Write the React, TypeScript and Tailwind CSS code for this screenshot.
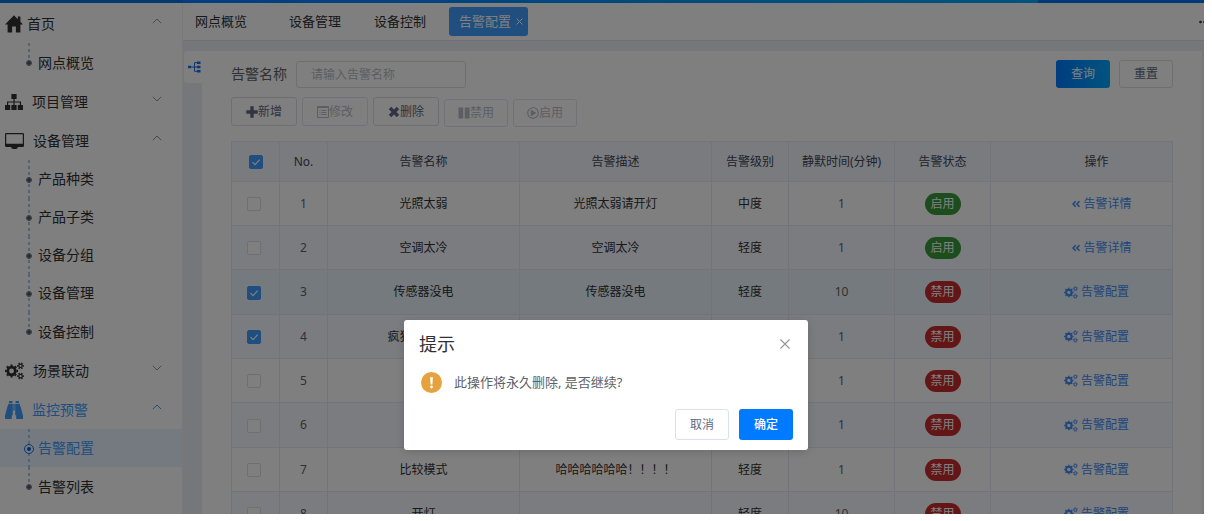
import React, { useState } from "react";
import { FaAngleDoubleLeft, FaRegPlayCircle } from "react-icons/fa";

type MenuGroup = {
  label: string;
  icon: React.ReactNode;
  open: boolean;
  gap: string;
  active?: boolean;
  children: string[];
};

type Row = {
  name: string;
  desc: string;
  level: string;
  minutes: number;
  enabled: boolean;
  checked: boolean;
  current?: boolean;
};

function HomeIcon() {
  return (
    <svg viewBox="0 0 18 18" className="size-[18px]" fill="currentColor" aria-hidden="true">
      <path d="M9 .3 0 9.600h2.600V17.600H7.100V11.600h3.800v6h4.500V9.600H18L15.400 6.700V1.600h-2.600v2.600z" />
    </svg>
  );
}

function SitemapIcon() {
  return (
    <svg viewBox="0 0 18 16" className="h-4 w-[18px]" fill="currentColor" aria-hidden="true">
      <path d="M6.400 0h5.200v5H6.400zM0 11h5.200v5H0zM6.400 11h5.200v5H6.400zM12.800 11H18v5h-5.200z" />
      <path d="M9 5v6M2.600 11V8h12.800v3" fill="none" stroke="currentColor" strokeWidth="1.200" />
    </svg>
  );
}

function MonitorIcon() {
  return (
    <svg viewBox="0 0 19 16" className="h-4 w-[19px]" fill="currentColor" aria-hidden="true">
      <path
        fillRule="evenodd"
        d="M1.300 0h16.400A1.300 1.300 0 0 1 19 1.300v11.400a1.300 1.300 0 0 1-1.300 1.300h-5v1.200h-1V16H7.300v-.8h-1V14h-5A1.300 1.300 0 0 1 0 12.700V1.300A1.300 1.300 0 0 1 1.300 0zM1.200 1.200v9.600h16.600V1.200z"
      />
    </svg>
  );
}

function CogsIcon({ className }: { className: string }) {
  return (
    <svg viewBox="0 0 18 17" className={className} fill="none" stroke="currentColor" aria-hidden="true">
      <circle cx="6.200" cy="8.500" r="3.600" strokeWidth="2.600" />
      <circle cx="6.200" cy="8.500" r="5.400" strokeWidth="1.600" pathLength="16" strokeDasharray="1 1" strokeDashoffset="0.5" />
      <circle cx="14.700" cy="3.600" r="1.700" strokeWidth="1.200" />
      <circle cx="14.700" cy="3.600" r="2.700" strokeWidth="1.100" pathLength="12" strokeDasharray="1 1" strokeDashoffset="0.5" />
      <circle cx="14.700" cy="13.400" r="1.700" strokeWidth="1.200" />
      <circle cx="14.700" cy="13.400" r="2.700" strokeWidth="1.100" pathLength="12" strokeDasharray="1 1" strokeDashoffset="0.5" />
    </svg>
  );
}

function BinocularsIcon() {
  return (
    <svg viewBox="0 0 18 18" className="size-[18px]" fill="currentColor" aria-hidden="true">
      <path d="M4 0h3.500v2H4zM10.500 0H14v2h-3.500zM3.500 2.700h4.300v11.500H6.800V18H0v-3.500L2.300 6zM14.500 2.700h-4.300v11.500h1V18H18v-3.500L15.700 6zM8.300 3h1.400v6.500H8.300z" />
    </svg>
  );
}

function PlusIcon() {
  return (
    <svg viewBox="0 0 12 12" className="size-3" fill="currentColor" aria-hidden="true">
      <path d="M4.300.300h3.400v4h4v3.400h-4v4H4.300v-4h-4V4.300h4z" />
    </svg>
  );
}

function CrossIcon() {
  return (
    <svg viewBox="0 0 12 12" className="size-3" fill="none" stroke="currentColor" aria-hidden="true">
      <path d="m2 2 8 8M10 2l-8 8" strokeWidth="3.400" />
    </svg>
  );
}

function ListIcon() {
  return (
    <svg viewBox="0 0 12 12" className="size-3" fill="none" stroke="currentColor" aria-hidden="true">
      <path d="M.5.5h11v11H.500zM.5 1.500h11M2.500 4.500h1M2.500 6.500h1M2.500 8.500h1M4.500 4.500h5M4.500 6.500h5M4.500 8.500h5" />
    </svg>
  );
}

function PauseIcon() {
  return (
    <svg viewBox="0 0 12 12" className="size-3" fill="currentColor" aria-hidden="true">
      <path d="M.5.500h4.700v11H.5zM6.800.5h4.700v11H6.800z" />
    </svg>
  );
}

function TreeIcon() {
  return (
    <svg viewBox="0 0 13 12" className="h-3 w-[13px]" fill="currentColor" aria-hidden="true">
      <path d="M0 4.700h3v2.600H0zM9 .500h3.500v2.500H9zM9 4.700h3.500v2.600H9zM9 9h3.500v2.500H9z" />
      <path d="M3 6h6M9 1.700H6.500v8.600H9" fill="none" stroke="currentColor" />
    </svg>
  );
}

function Chevron({ open }: { open: boolean }) {
  return (
    <svg viewBox="0 0 10 6" className="h-[6px] w-[10px]" fill="none" stroke="currentColor" aria-hidden="true">
      <path d={open ? "M.8 5.200 5 1l4.200 4.200" : "M.8.800 5 5 9.200.800"} />
    </svg>
  );
}

const menu: MenuGroup[] = [
  { label: "首页", icon: <HomeIcon />, open: true, gap: "gap-1", children: ["网点概览"] },
  { label: "项目管理", icon: <SitemapIcon />, open: false, gap: "gap-[9px]", children: [] },
  {
    label: "设备管理",
    icon: <MonitorIcon />,
    open: true,
    gap: "gap-[9px]",
    children: ["产品种类", "产品子类", "设备分组", "设备管理", "设备控制"],
  },
  {
    label: "场景联动",
    icon: <CogsIcon className="h-[18px] w-[19px]" />,
    open: false,
    gap: "gap-[9px]",
    children: [],
  },
  {
    label: "监控预警",
    icon: <BinocularsIcon />,
    open: true,
    gap: "gap-[9px]",
    active: true,
    children: ["告警配置", "告警列表"],
  },
];

const rows: Row[] = [
  { name: "光照太弱", desc: "光照太弱请开灯", level: "中度", minutes: 1, enabled: true, checked: false },
  { name: "空调太冷", desc: "空调太冷", level: "轻度", minutes: 1, enabled: true, checked: false },
  { name: "传感器没电", desc: "传感器没电", level: "轻度", minutes: 10, enabled: false, checked: true, current: true },
  { name: "疯狂疯狂疯狂", desc: "", level: "", minutes: 1, enabled: false, checked: true },
  { name: "", desc: "", level: "", minutes: 1, enabled: false, checked: false },
  { name: "", desc: "", level: "", minutes: 1, enabled: false, checked: false },
  { name: "比较模式", desc: "哈哈哈哈哈哈！！！！", level: "轻度", minutes: 1, enabled: false, checked: false },
  { name: "开灯", desc: "", level: "轻度", minutes: 10, enabled: false, checked: false },
];

function Sidebar() {
  return (
    <nav className="w-[183px] shrink-0 border-r border-[#f0f0f4] bg-white pt-px text-sm text-[#303133]">
      {menu.map((group) => (
        <div key={group.label}>
          <button
            type="button"
            aria-expanded={group.open}
            className={`flex h-[39px] w-full items-center pl-[5px] pr-5 ${group.gap} ${
              group.active ? "text-[#409eff]" : ""
            }`}
          >
            {group.icon}
            <span className="leading-5">{group.label}</span>
            <span className={`mb-[6px] ml-auto ${group.active ? "" : "text-[#909399]"}`}>
              <Chevron open={group.open} />
            </span>
          </button>
          {group.children.map((child, i) => {
            const active = child === "告警配置";
            const last = i === group.children.length - 1;
            return (
              <a
                key={child}
                href="#"
                className={`relative flex h-[38px] items-center pl-[38px] last:h-[39px] ${
                  active ? "bg-[#e8f4ff] text-[#409eff]" : ""
                }`}
              >
                <span
                  className={`absolute left-7 top-0 w-[2px] bg-[repeating-linear-gradient(to_bottom,#a5caee_0_3px,transparent_3px_6px)] ${
                    last ? "h-4" : "h-full"
                  }`}
                />
                {active ? (
                  <span className="absolute left-6 top-[15px] size-[10px] rounded-full border border-[#1673f0] bg-[#e8f4ff] p-[2px]">
                    <span className="block size-1 rounded-full bg-[#0060e6]" />
                  </span>
                ) : (
                  <span className="absolute left-[27px] top-[18px] size-1 rounded-full bg-[#4a5068] outline outline-[#6c7080]" />
                )}
                <span className="leading-5">{child}</span>
              </a>
            );
          })}
        </div>
      ))}
    </nav>
  );
}

function Check({
  label,
  checked,
  onChange,
}: {
  label: string;
  checked: boolean;
  onChange: () => void;
}) {
  return (
    <label className="inline-grid place-items-center align-middle">
      <input
        type="checkbox"
        aria-label={label}
        checked={checked}
        onChange={onChange}
        className="peer col-start-1 row-start-1 size-[14px] appearance-none rounded-[2px] border border-[#dcdfe6] bg-white checked:border-[#409eff] checked:bg-[#409eff]"
      />
      <svg
        viewBox="0 0 14 14"
        className="pointer-events-none invisible col-start-1 row-start-1 size-[14px] peer-checked:visible"
        fill="none"
        stroke="white"
        aria-hidden="true"
      >
        <path d="m3.500 7.200 2.500 2.500 4.700-5" strokeWidth="1.2" />
      </svg>
    </label>
  );
}

function ToolButton({
  children,
  disabled,
  compact,
}: {
  children: React.ReactNode;
  disabled?: boolean;
  compact?: boolean;
}) {
  return (
    <button
      type="button"
      disabled={disabled}
      className={`flex items-center justify-center rounded-[3px] border border-[#dcdfe6] bg-white text-xs text-[#606a80] disabled:border-[#e0e4f0] disabled:text-[#b8bcc8] ${
        compact ? "mt-[2px] h-7 w-16" : "h-[29px] w-[66px]"
      }`}
    >
      {children}
    </button>
  );
}

function AlarmTable() {
  const [checked, setChecked] = useState(rows.map((row) => row.checked));
  const [all, setAll] = useState(true);
  const cell = "border-r border-b border-[#e6e9f2]";
  return (
    <table className="mt-[14px] w-full table-fixed border-separate border-spacing-0 border-l border-t border-[#e6e9f2] text-center text-xs text-[#303133]">
      <colgroup>
        <col className="w-12" />
        <col className="w-12" />
        <col />
        <col />
        <col className="w-[77px]" />
        <col className="w-[106px]" />
        <col className="w-24" />
        <col className="w-[182px]" />
      </colgroup>
      <thead>
        <tr className="h-10 bg-[#f5f7fd] text-[#404756]">
          <th className={cell}>
            <Check label="全选" checked={all} onChange={() => setAll(!all)} />
          </th>
          {["No.", "告警名称", "告警描述", "告警级别", "静默时间(分钟)", "告警状态"].map((title) => (
            <th key={title} className={`${cell} font-normal`}>
              {title}
            </th>
          ))}
          <th className={`${cell} pl-[30px] font-normal`}>操作</th>
        </tr>
      </thead>
      <tbody>
        {rows.map((row, i) => (
          <tr
            key={i}
            className={`h-11 nth-[3n]:h-[45px] ${
              row.current ? "bg-[#e8f4fb]" : i % 2 ? "bg-[#f7f9ff]" : "bg-white"
            }`}
          >
            <td className={cell}>
              <span className="pr-1">
                <Check
                  label={`选择第 ${i + 1} 行`}
                  checked={checked[i]}
                  onChange={() => setChecked(checked.map((v, k) => (k === i ? !v : v)))}
                />
              </span>
            </td>
            <td className={`${cell} text-[#606266]`}>{i + 1}</td>
            <td className={cell}>{row.name}</td>
            <td className={cell}>{row.desc}</td>
            <td className={cell}>{row.level}</td>
            <td className={`${cell} text-[#606266]`}>{row.minutes}</td>
            <td className={cell}>
              <span
                className={`inline-block h-[22px] w-9 rounded-[11px] align-middle leading-[22px] text-white ${
                  row.enabled ? "bg-[#3a993a]" : "bg-[#c92c2c]"
                }`}
              >
                {row.enabled ? "启用" : "禁用"}
              </span>
            </td>
            <td className={cell}>
              <a
                href="#"
                className={`flex items-center justify-center text-[#3f8cf5] ${
                  row.enabled ? "gap-[2px] pl-10" : "gap-[3px] pl-[30px]"
                }`}
              >
                {row.enabled ? (
                  <FaAngleDoubleLeft className="size-[10px]" />
                ) : (
                  <CogsIcon className="h-[13px] w-[14px]" />
                )}
                {row.enabled ? "告警详情" : "告警配置"}
              </a>
            </td>
          </tr>
        ))}
      </tbody>
    </table>
  );
}

function ConfirmDialog() {
  return (
    <div className="absolute inset-0 flex items-start justify-center overflow-hidden bg-black/50 pl-2 pt-[320px]">
      <div
        role="dialog"
        aria-modal="true"
        aria-labelledby="confirm-title"
        className="w-[404px] rounded-[3px] bg-white px-[15px] pb-[10px] pt-3 shadow-[0_2px_8px_rgba(0,0,0,0.15)]"
      >
        <div className="flex items-center justify-between">
          <h2 id="confirm-title" className="text-lg leading-6 text-[#303133]">
            提示
          </h2>
          <button type="button" aria-label="关闭" className="pr-[3px] text-[#909399]">
            <svg viewBox="0 0 10 10" className="size-[10px]" fill="none" stroke="currentColor" aria-hidden="true">
              <path d="m.5.500 9 9M9.500.500l-9 9" strokeWidth="1.100" />
            </svg>
          </button>
        </div>
        <div className="mt-4 flex items-center gap-3 pl-[2px] text-[13px] text-[#606266]">
          <svg viewBox="0 0 21 21" className="size-[21px]" aria-hidden="true">
            <circle cx="10.500" cy="10.500" r="10.500" fill="#e6a23c" />
            <path d="M9.100 5.200h2.800l-.5 7.200h-1.800z" fill="white" />
            <circle cx="10.500" cy="15" r="1.400" fill="white" />
          </svg>
          <p>此操作将永久删除, 是否继续?</p>
        </div>
        <div className="mt-4 flex justify-end gap-[10px] text-xs">
          <button type="button" className="h-[31px] w-[54px] rounded-[3px] border border-[#dcdff0] text-[#606a80]">
            取消
          </button>
          <button type="button" className="h-[31px] w-[54px] rounded-[3px] bg-[#007bff] font-medium text-white">
            确定
          </button>
        </div>
      </div>
    </div>
  );
}

export default function App() {
  return (
    <div className="h-screen bg-white pb-[7px] pr-2 font-['Noto_Sans','Noto_Sans_CJK_SC',sans-serif]">
      <div className="relative flex h-full flex-col overflow-hidden">
        <header className="flex h-[3px] shrink-0">
          <div className="w-[182px] bg-[#0072e8]" />
          <div className="flex-1 bg-linear-to-r from-[#007bff] to-[#00a8ff]" />
          <div className="w-[166px] bg-[#0072f0]" />
        </header>
        <div className="flex min-h-0 flex-1">
          <Sidebar />
          <div className="flex min-w-0 flex-1 flex-col bg-[#ebeef7]">
            <div className="flex h-[38px] shrink-0 items-center border-b border-[#dfe2ea] bg-white pl-3 text-[13px] text-[#303133]">
              <a href="#" className="mr-[42px]">网点概览</a>
              <a href="#" className="mr-[33px]">设备管理</a>
              <a href="#" className="mr-[23px]">设备控制</a>
              <a
                href="#"
                className="flex h-[29px] items-center gap-[5px] rounded-[3px] bg-[#409eff] pl-[10px] pr-[5px] text-white"
              >
                告警配置
                <svg viewBox="0 0 7 7" className="size-[7px]" fill="none" stroke="currentColor" aria-hidden="true">
                  <path d="m.5.500 6 6M6.500.500l-6 6" />
                </svg>
              </a>
              <button type="button" aria-label="更多" className="ml-auto w-[5px] overflow-hidden">
                <svg viewBox="0 0 12 4" className="h-1 w-3 max-w-none" fill="currentColor" aria-hidden="true">
                  <circle cx="1.500" cy="2" r="1.300" />
                  <circle cx="5.500" cy="2" r="1.300" />
                  <circle cx="9.500" cy="2" r="1.300" />
                </svg>
              </button>
            </div>
            <div className="flex min-h-0 flex-1 items-start pr-[2px] pt-[10px]">
              <button
                type="button"
                aria-label="展开网点树"
                className="ml-px flex h-8 w-[18px] shrink-0 items-center justify-center rounded-l-[3px] bg-white pl-[3px] text-[#1a6cf0]"
              >
                <TreeIcon />
              </button>
              <main className="min-w-0 flex-1 bg-white px-[29px] pt-[9px]">
                <div className="flex items-center">
                  <label htmlFor="alarm-name" className="mr-[9px] text-sm leading-5 text-[#606266]">
                    告警名称
                  </label>
                  <input
                    id="alarm-name"
                    type="text"
                    placeholder="请输入告警名称"
                    className="h-[27px] w-[170px] rounded-[3px] border border-[#dcdfe6] bg-white px-[14px] text-xs placeholder:text-[#b8bcc6]"
                  />
                  <div className="ml-auto flex gap-[9px] text-xs">
                    <button
                      type="button"
                      className="h-7 w-[54px] rounded-[3px] bg-linear-to-r from-[#007bff] to-[#00a8ff] text-white"
                    >
                      查询
                    </button>
                    <button type="button" className="h-7 w-[54px] rounded-[3px] border border-[#dcdfe6] text-[#606a80]">
                      重置
                    </button>
                  </div>
                </div>
                <div className="mt-[9px] flex gap-[5px]">
                  <ToolButton>
                    <PlusIcon />
                    新增
                  </ToolButton>
                  <ToolButton disabled>
                    <ListIcon />
                    修改
                  </ToolButton>
                  <ToolButton>
                    <CrossIcon />
                    删除
                  </ToolButton>
                  <ToolButton disabled compact>
                    <PauseIcon />
                    禁用
                  </ToolButton>
                  <ToolButton disabled compact>
                    <FaRegPlayCircle className="size-3" />
                    启用
                  </ToolButton>
                </div>
                <AlarmTable />
              </main>
            </div>
          </div>
        </div>
        <ConfirmDialog />
      </div>
    </div>
  );
}
